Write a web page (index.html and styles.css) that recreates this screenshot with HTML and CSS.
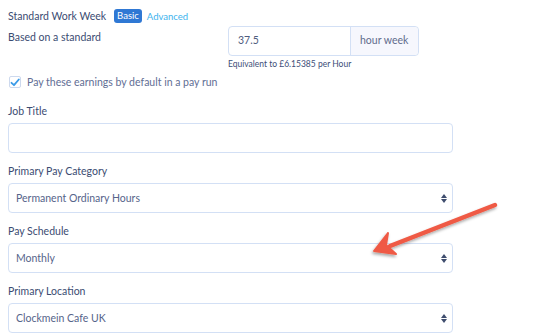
FILE: index.html
```html
<!DOCTYPE html>
<html lang="en">
<head>
    <meta charset="UTF-8">
    <title>Pay Settings</title>
    <link rel="stylesheet" href="styles.css">
</head>
<body>
    <div class="form">
        <div class="section-head">
            <span class="section-title">Standard Work Week</span>
            <span class="badge">Basic</span>
            <a class="mode-link">Advanced</a>
        </div>

        <div class="std-row">
            <div class="std-label">Based on a standard</div>
            <div class="std-field">
                <div class="input-group">
                    <div class="input-value">37.5</div>
                    <div class="input-addon">hour week</div>
                </div>
                <div class="help">Equivalent to £6.15385 per Hour</div>
            </div>
        </div>

        <label class="check-row">
            <span class="checkbox">
                <svg width="10" height="9" viewBox="0 0 10 9"><path d="M1.5 4.8 L4 7.2 L8.8 1.5" fill="none" stroke="#3b9be8" stroke-width="1.8" stroke-linecap="round" stroke-linejoin="round"/></svg>
            </span>
            Pay these earnings by default in a pay run
        </label>

        <div class="field first">
            <div class="field-label">Job Title</div>
            <div class="box"></div>
        </div>

        <div class="field">
            <div class="field-label">Primary Pay Category</div>
            <div class="box select">Permanent Ordinary Hours<span class="caret"></span></div>
        </div>

        <div class="field">
            <div class="field-label">Pay Schedule</div>
            <div class="box select">Monthly<span class="caret"></span></div>
        </div>

        <div class="field">
            <div class="field-label">Primary Location</div>
            <div class="box select">Clockmein Cafe UK<span class="caret"></span></div>
        </div>
    </div>

    <svg class="pointer" width="547" height="335" viewBox="0 0 547 335">
        <defs>
            <filter id="shadow" x="-20%" y="-20%" width="140%" height="140%">
                <feDropShadow dx="-1" dy="2" stdDeviation="1.5" flood-color="#000" flood-opacity="0.35"/>
            </filter>
        </defs>
        <g filter="url(#shadow)">
            <line x1="495" y1="205" x2="390" y2="246" stroke="#ef5a45" stroke-width="4.5" stroke-linecap="round"/>
            <path d="M374 251 L388 233 L386 245 L396 254 Z" fill="#ef5a45" stroke="#ef5a45" stroke-width="2" stroke-linejoin="round"/>
        </g>
    </svg>
</body>
</html>
```

FILE: styles.css
```css
body {
    margin: 0;
    font-family: Lato, "Open Sans", Arial, sans-serif;
    color: #3b4c72;
    background: #fff;
    width: 547px;
    height: 335px;
    overflow: hidden;
    position: relative;
}

.form {
    width: 445px;
    padding: 8px 0 0 8px;
    display: flex;
    flex-direction: column;
}

.section-head {
    display: flex;
    align-items: center;
    height: 16px;
    font-size: 10.5px;
}

.section-title {
    margin-right: 8px;
}

.badge {
    background: #2f78d4;
    color: #fff;
    font-size: 9.5px;
    padding: 2px 3px;
    border-radius: 3px;
    line-height: 10px;
    margin-right: 5px;
}

.mode-link {
    color: #3db3ee;
    font-size: 9.5px;
}

.std-row {
    display: flex;
    margin-top: 2px;
}

.std-label {
    width: 220px;
    font-size: 10.5px;
    padding-top: 5px;
}

.input-group {
    display: flex;
    width: 191px;
    height: 30px;
    border: 1px solid #d3e0f5;
    border-radius: 4px;
    box-sizing: border-box;
    font-size: 10.5px;
}

.input-value {
    flex: 1;
    color: #4f5d80;
    padding: 7px 0 0 9px;
}

.input-addon {
    width: 68px;
    background: #f6f7fd;
    border-left: 1px solid #d3e0f5;
    color: #5f6c8c;
    padding: 7px 0 0 9px;
    box-sizing: border-box;
    border-radius: 0 4px 4px 0;
}

.help {
    font-size: 8.5px;
    margin-top: 3px;
    color: #3d4e78;
}

.check-row {
    display: flex;
    align-items: center;
    font-size: 10.5px;
    color: #5f6e94;
    margin-top: 7px;
    padding-left: 1px;
}

.checkbox {
    width: 10px;
    height: 10px;
    border: 1px solid #cdd9ee;
    border-radius: 2px;
    margin-right: 6px;
    display: flex;
    align-items: center;
    justify-content: center;
}

.field {
    display: flex;
    flex-direction: column;
    margin-top: 9px;
}

.field.first {
    margin-top: 14px;
}

.field-label {
    font-size: 10.5px;
    height: 18px;
    margin-bottom: 3px;
    display: flex;
    align-items: center;
}

.box {
    height: 30px;
    border: 1px solid #d3e0f5;
    border-radius: 4px;
    box-sizing: border-box;
    font-size: 10.5px;
    color: #56648a;
    display: flex;
    align-items: center;
    padding: 0 7px;
}

.select {
    justify-content: space-between;
}

.caret {
    width: 0;
    height: 0;
    position: relative;
    border-left: 3px solid transparent;
    border-right: 3px solid transparent;
    border-bottom: 4px solid #3f4d6e;
    margin-top: -5px;
    margin-right: -2px;
}

.caret::after {
    content: "";
    position: absolute;
    left: -3px;
    top: 5px;
    border-left: 3px solid transparent;
    border-right: 3px solid transparent;
    border-top: 4px solid #3f4d6e;
}

.pointer {
    position: absolute;
    left: 0;
    top: 0;
    pointer-events: none;
}
```
